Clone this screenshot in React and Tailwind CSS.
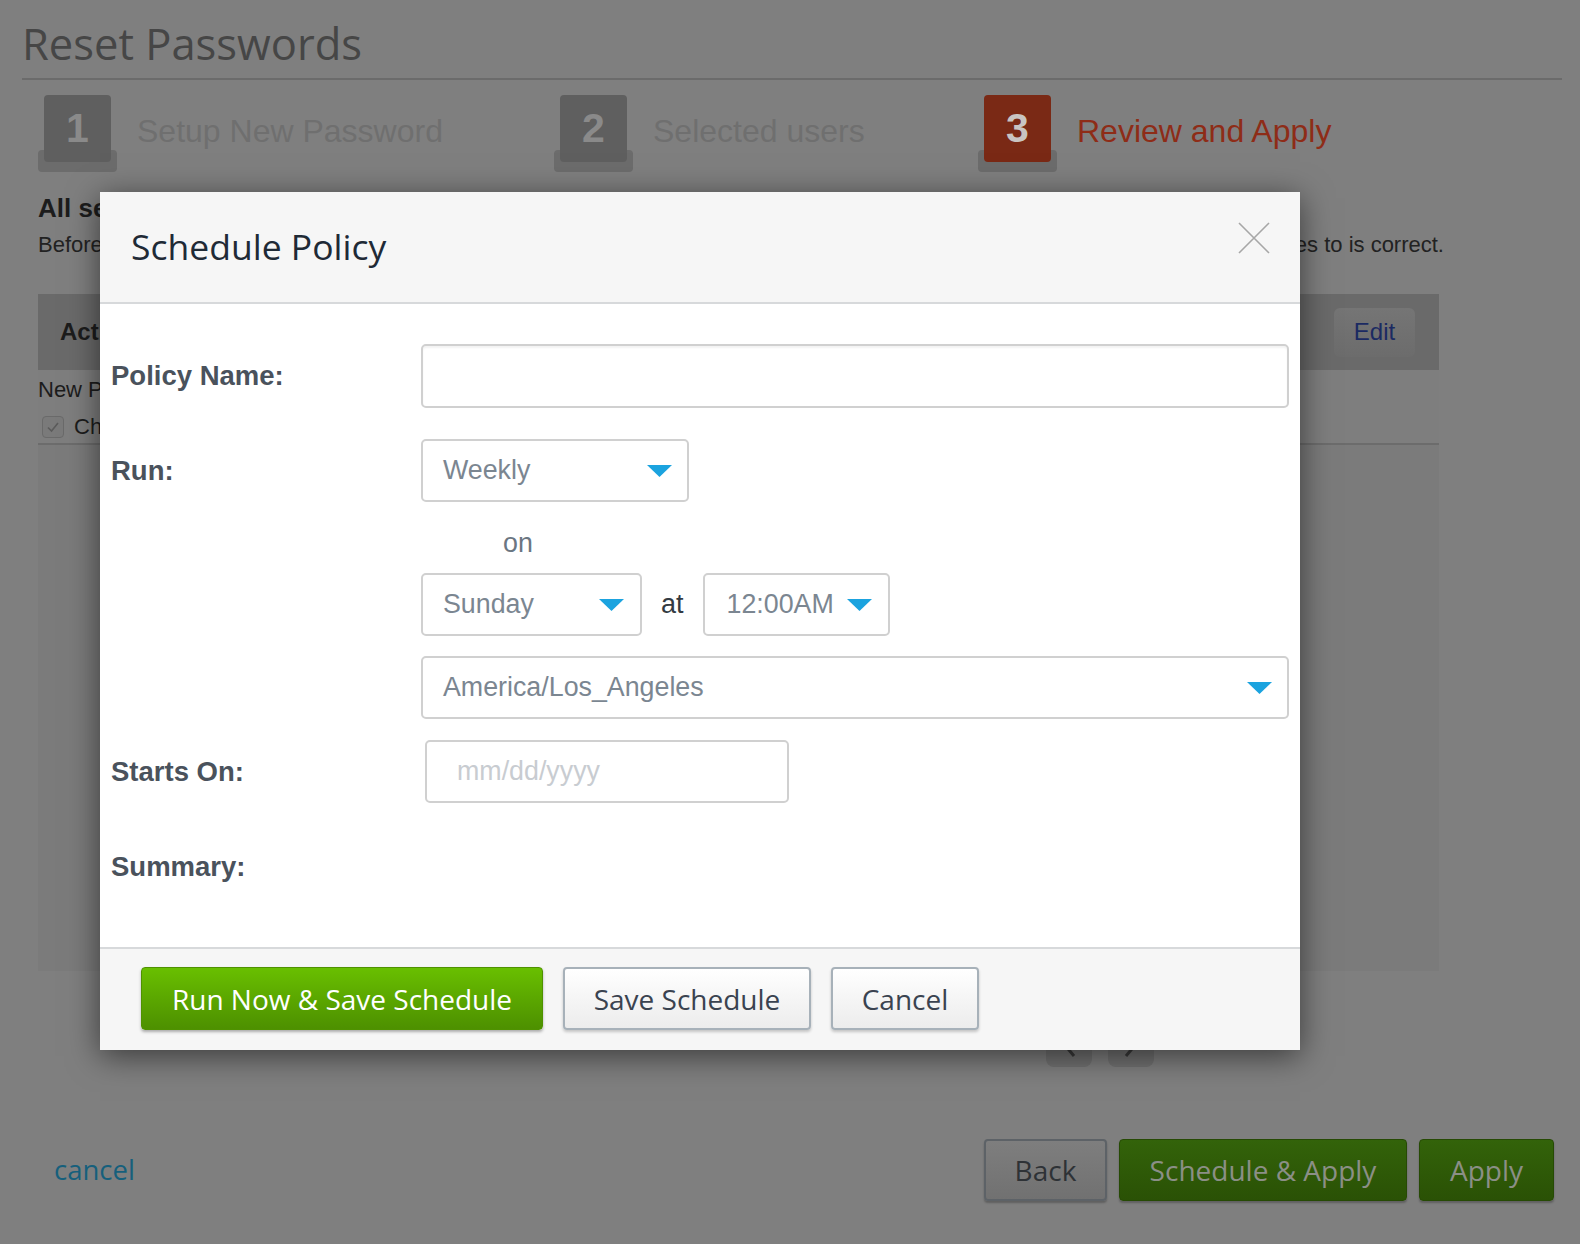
import React from "react";

const ARIAL = "font-['Liberation_Sans',Arial,sans-serif]";
const OPEN = "font-['Open_Sans',sans-serif]";

function Arrow() {
  return (
    <svg width="25" height="12" viewBox="0 0 25 12" className="shrink-0">
      <polygon points="0,0 25,0 12.5,12" fill="#1ba3df" />
    </svg>
  );
}

function Select({ value, className = "" }) {
  return (
    <div
      className={`flex h-[63px] items-center justify-between rounded-[5px] border-2 border-[#d0d0d0] bg-white pl-[20px] pr-[15px] ${className}`}
    >
      <span className={`${ARIAL} text-[26.8px] text-[#7b8691]`}>{value}</span>
      <Arrow />
    </div>
  );
}

function Step({ n, label, active }) {
  return (
    <div className="flex items-start">
      <div className="relative h-[77px] w-[79px] shrink-0">
        <div className="absolute bottom-0 left-0 h-[22px] w-[79px] rounded-[4px] bg-[#6c6c6c]" />
        <div
          className={`absolute left-[6px] top-0 flex h-[67px] w-[67px] items-center justify-center rounded-[4px] ${
            active ? "bg-[#7a2915]" : "bg-[#5f5f5f]"
          }`}
        >
          <span className={`${ARIAL} text-[41px] font-bold ${active ? "text-[#c9c4c2]" : "text-[#8a8a8a]"}`}>{n}</span>
        </div>
      </div>
      <span
        className={`${ARIAL} ml-[20px] mt-[18px] whitespace-nowrap text-[32px] leading-[36px] ${
          active ? "text-[#8e2c17]" : "text-[#6f6f6f]"
        }`}
      >
        {label}
      </span>
    </div>
  );
}

export default function App() {
  return (
    <div className="relative h-[1244px] w-[1580px] overflow-hidden bg-[#7f7f7f]">
      {/* dimmed page */}
      <div className="pl-[22px] pr-[18px]">
        <h1 className={`${OPEN} pt-[14px] text-[43.5px] leading-[60px] text-[#464646]`}>Reset Passwords</h1>
        <div className="mt-[4px] h-[2px] bg-[#6b6b6b]" />
      </div>

      <div className="px-[38px]">
        <div className="mt-[15px] flex">
          <div className="w-[516px]">
            <Step n="1" label="Setup New Password" />
          </div>
          <div className="w-[424px]">
            <Step n="2" label="Selected users" />
          </div>
          <Step n="3" label="Review and Apply" active />
        </div>

        <div className={`${ARIAL} mt-[21px] text-[26px] font-bold leading-[30px] text-[#1c1c1c]`}>All selected settings</div>
        <div className={`${ARIAL} mt-[8px] flex w-[1406px] justify-between whitespace-nowrap text-[22px] leading-[28px] text-[#222]`}>
          <span>Before applying, please make sure that</span>
          <span>the list of users this policy applies to is correct.</span>
        </div>

        {/* panel */}
        <div className="mt-[35px] h-[677px] w-[1401px] bg-[#7b7b7b]">
          <div className="flex h-[76px] items-center justify-between bg-[#6a6a6a] pl-[22px] pr-[24px]">
            <span className={`${ARIAL} text-[24px] font-bold text-[#1c1c1c]`}>Action</span>
            <div className="flex h-[49px] w-[81px] items-center justify-center rounded-[6px] bg-gradient-to-b from-[#757575] to-[#6c6c6c]">
              <span className={`${ARIAL} text-[24px] text-[#1b2a62]`}>Edit</span>
            </div>
          </div>
          <div className="h-[75px] border-b-2 border-[#6c6c6c] bg-[#7e7e7e]">
            <div className={`${ARIAL} pt-[6px] text-[22px] leading-[28px] text-[#1c1c1c]`}>New Password</div>
            <div className="mt-[6px] flex items-center pl-[4px]">
              <div className="flex h-[22px] w-[22px] items-center justify-center rounded-[4px] border border-[#6a6a6a] bg-[#7a7a7a]">
                <svg width="14" height="12" viewBox="0 0 14 12">
                  <path d="M2 6.5 L5.5 10 L12 2" stroke="#5b5b5b" strokeWidth="1.6" fill="none" />
                </svg>
              </div>
              <span className={`${ARIAL} ml-[10px] text-[22px] text-[#1c1c1c]`}>Change password at next login</span>
            </div>
          </div>
        </div>

        {/* pagination */}
        <div className="ml-[1008px] mt-[38px] flex gap-[16px]">
          <div className="flex h-[58px] w-[46px] items-center justify-center rounded-[8px] bg-[#727272] pt-[12px]">
            <svg width="16" height="28" viewBox="0 0 16 28">
              <path d="M13 2 L3 14 L13 26" stroke="#3a3a3a" strokeWidth="3" fill="none" />
            </svg>
          </div>
          <div className="flex h-[58px] w-[46px] items-center justify-center rounded-[8px] bg-[#727272] pt-[12px]">
            <svg width="16" height="28" viewBox="0 0 16 28">
              <path d="M3 2 L13 14 L3 26" stroke="#3a3a3a" strokeWidth="3" fill="none" />
            </svg>
          </div>
        </div>
      </div>

      {/* bottom action bar */}
      <div className="mt-[72px] flex items-center justify-between pl-[54px] pr-[26px]">
        <span className={`${OPEN} text-[27.5px] text-[#165f7c]`}>cancel</span>
        <div className="flex gap-[12px]">
          <div className={`${OPEN} flex h-[62px] w-[123px] items-center justify-center rounded-[4px] border-2 border-[#5d6267] bg-gradient-to-b from-[#7e7e7e] to-[#717171] text-[28px] text-[#2e3236] shadow-[0_2px_2px_rgba(0,0,0,0.25)]`}>
            Back
          </div>
          <div className={`${OPEN} flex h-[62px] w-[288px] items-center justify-center rounded-[4px] border border-[#264a04] bg-gradient-to-b from-[#33630a] to-[#2a5105] text-[28px] text-[#8b8f86] shadow-[0_2px_2px_rgba(0,0,0,0.25)]`}>
            Schedule &amp; Apply
          </div>
          <div className={`${OPEN} flex h-[62px] w-[135px] items-center justify-center rounded-[4px] border border-[#264a04] bg-gradient-to-b from-[#33630a] to-[#2a5105] text-[28px] text-[#8b8f86] shadow-[0_2px_2px_rgba(0,0,0,0.25)]`}>
            Apply
          </div>
        </div>
      </div>

      {/* modal dialog */}
      <div className="absolute left-[100px] top-[192px] flex h-[858px] w-[1200px] flex-col bg-white shadow-[0_6px_30px_rgba(0,0,0,0.55)]">
        <div className="relative flex h-[112px] items-center border-b-2 border-[#d7d9db] bg-[#f6f6f6] pl-[31px]">
          <span className={`${OPEN} text-[35.5px] text-[#1f2a36]`}>Schedule Policy</span>
          <svg className="absolute right-[30px] top-[30px]" width="32" height="32" viewBox="0 0 32 32">
            <path d="M1 1 L31 31 M31 1 L1 31" stroke="#a7a7a7" strokeWidth="1.6" />
          </svg>
        </div>

        <div className="flex-1 pl-[11px] pr-[11px] pt-[40px]">
          <div className="grid grid-cols-[310px_1fr] items-center">
            <label className={`${ARIAL} text-[27.5px] font-bold text-[#4a525c]`}>Policy Name:</label>
            <div className="h-[64px] rounded-[5px] border-2 border-[#d0d0d0] bg-white shadow-[inset_0_2px_2px_rgba(0,0,0,0.05)]" />

            <label className={`${ARIAL} mt-[31px] text-[27.5px] font-bold text-[#4a525c]`}>Run:</label>
            <div className="mt-[31px]">
              <Select value="Weekly" className="w-[268px]" />
            </div>

            <div />
            <div className={`${ARIAL} mt-[17px] pl-[82px] text-[26.8px] leading-[48px] text-[#6b7682]`}>on</div>

            <div />
            <div className="mt-[6px] flex items-center">
              <Select value="Sunday" className="w-[221px] pr-[16px]" />
              <span className={`${ARIAL} mx-[19px] text-[27px] text-[#333a42]`}>at</span>
              <Select value="12:00AM" className="w-[187px] pl-[22px] pr-[16px]" />
            </div>

            <div />
            <div className="mt-[20px]">
              <Select value="America/Los_Angeles" />
            </div>

            <label className={`${ARIAL} mt-[21px] text-[27.5px] font-bold text-[#4a525c]`}>Starts On:</label>
            <div className="mt-[21px] pl-[4px]">
              <div className="flex h-[63px] w-[364px] items-center rounded-[5px] border-2 border-[#d0d0d0] bg-white pl-[30px]">
                <span className={`${ARIAL} text-[26.8px] text-[#c8ccd1]`}>mm/dd/yyyy</span>
              </div>
            </div>

            <label className={`${ARIAL} mt-[32px] text-[27.5px] font-bold leading-[63px] text-[#4a525c]`}>Summary:</label>
            <div className="mt-[32px] h-[63px]" />
          </div>
        </div>

        <div className="flex h-[103px] items-start gap-[20px] border-t-2 border-[#d7d9db] bg-[#f6f6f6] pl-[41px] pt-[18px]">
          <div className={`${OPEN} flex h-[63px] w-[402px] items-center justify-center rounded-[4px] border border-[#4f9200] bg-gradient-to-b from-[#69bf00] to-[#4d9000] text-[28px] text-white shadow-[0_2px_3px_rgba(0,0,0,0.3)]`}>
            Run Now &amp; Save Schedule
          </div>
          <div className={`${OPEN} flex h-[63px] w-[248px] items-center justify-center rounded-[4px] border-2 border-[#a7b1b9] bg-gradient-to-b from-white to-[#ececec] text-[28px] text-[#3a4350] shadow-[0_2px_3px_rgba(0,0,0,0.2)]`}>
            Save Schedule
          </div>
          <div className={`${OPEN} flex h-[63px] w-[148px] items-center justify-center rounded-[4px] border-2 border-[#a7b1b9] bg-gradient-to-b from-white to-[#ececec] text-[28px] text-[#3a4350] shadow-[0_2px_3px_rgba(0,0,0,0.2)]`}>
            Cancel
          </div>
        </div>
      </div>
    </div>
  );
}
